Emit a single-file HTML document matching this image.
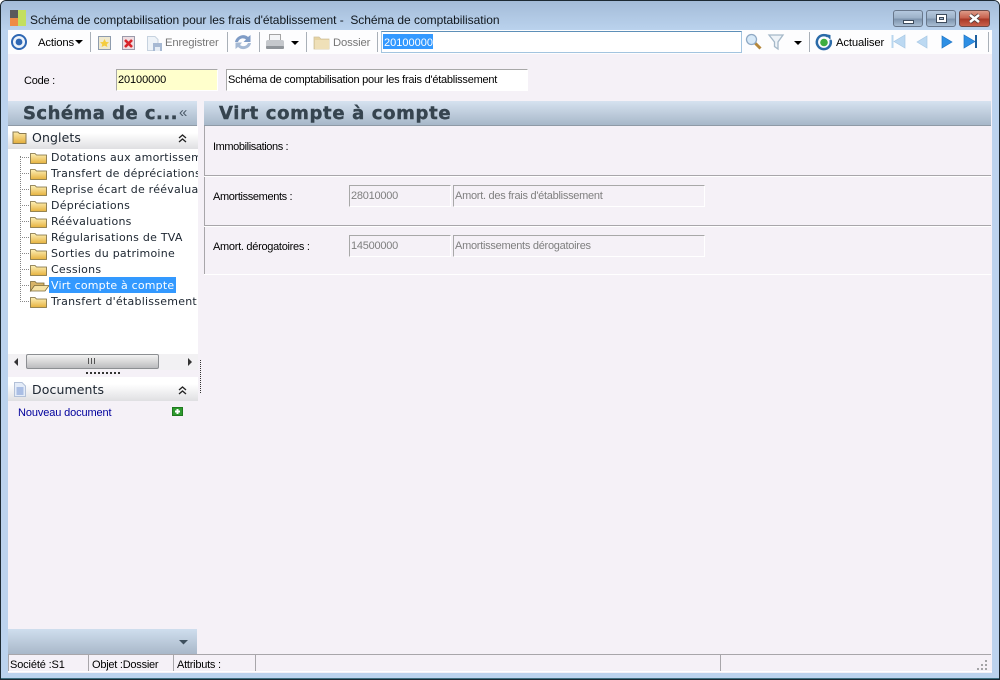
<!DOCTYPE html>
<html><head><meta charset="utf-8"><style>
html,body{margin:0;padding:0;width:1000px;height:680px;overflow:hidden;background:#fff}
*{box-sizing:border-box}
.a{position:absolute}
.t{position:absolute;margin-top:1px;font-family:"Liberation Sans",sans-serif;font-size:11px;line-height:14px;white-space:nowrap;color:#000;letter-spacing:-.24px}
.tb{letter-spacing:-.15px;font-size:11.3px}
.v{position:absolute;margin-top:1px;font-family:"DejaVu Sans",sans-serif;font-size:11px;line-height:14px;white-space:nowrap;color:#1c2530;letter-spacing:.24px}
.h{position:absolute;margin-top:1px;font-family:"DejaVu Sans",sans-serif;font-weight:bold;font-size:18px;line-height:22px;white-space:nowrap;color:#36444f;-webkit-text-stroke:.4px #36444f}
.sep{position:absolute;top:32px;width:1px;height:20px;background:#a9b0b8}
.gh{position:absolute;height:25px;background:linear-gradient(#d6e2f0,#a7b8c9);border-bottom:1px solid #8f9aa6}
.inp{position:absolute;height:22px;background:#f5f1f7;border-top:1px solid #a8a8a8;border-left:1px solid #a8a8a8;border-bottom:1px solid #fff;border-right:1px solid #fff;font-family:"Liberation Sans",sans-serif;font-size:11px;line-height:21px;color:#7f7f7f;padding-left:1px;white-space:nowrap;letter-spacing:-.24px}
.line{position:absolute;background:#a8a6aa}
.white{position:absolute;background:#fff}
.btn{position:absolute;top:10px;height:17px;border:1px solid #68778b;border-radius:3px}
svg{position:absolute;overflow:visible}
</style></head><body>
<div class="a" style="left:0;top:0;width:1000px;height:680px;background:#bcd3ee;border:1px solid #1d2a33;border-radius:6px 6px 0 0"></div>
<div class="a" style="left:1px;top:1px;width:998px;height:29px;background:linear-gradient(#a4bcd8,#bad2ed);border-radius:5px 5px 0 0"></div>
<div class="a" style="left:8px;top:30px;width:984px;height:24px;background:#fdfdfe"></div>
<div class="a" style="left:8px;top:54px;width:984px;height:601px;background:#f5f1f7"></div>
<div class="a" style="left:8px;top:655px;width:984px;height:18px;background:#f5f1f7"></div>
<div class="a" style="left:1px;top:678px;width:998px;height:1px;background:#3f6f80"></div>

<div class="a" style="left:10px;top:10px;width:8px;height:8px;background:#5b5b5b"></div>
<div class="a" style="left:10px;top:18px;width:8px;height:8px;background:#ee8b45"></div>
<div class="a" style="left:18px;top:10px;width:8px;height:16px;background:#c3df5e"></div>
<div class="t" style="left:30px;top:12px;font-size:12px;letter-spacing:-.035px;color:#10171d">Schéma de comptabilisation pour les frais d'établissement -&nbsp; Schéma de comptabilisation</div>

<div class="btn" style="left:893px;width:30px;background:linear-gradient(#b4c8de 0,#9db2c9 45%,#7f95ae 55%,#a9bed4)"></div>
<div class="a" style="left:903px;top:20px;width:11px;height:4px;background:#fff;border:1px solid #3d4b5c"></div>
<div class="btn" style="left:926px;width:30px;background:linear-gradient(#b4c8de 0,#9db2c9 45%,#7f95ae 55%,#a9bed4)"></div>
<div class="a" style="left:936px;top:14px;width:11px;height:9px;background:#fff;border:1px solid #3d4b5c"><div class="a" style="left:2px;top:2px;width:5px;height:3px;background:#a9bdd3;border:1px solid #3d4b5c"></div></div>
<div class="btn" style="left:959px;width:31px;background:linear-gradient(#dd9a88 0,#c8634f 45%,#a93a28 55%,#c8614c);border-color:#6b4a48"></div>
<svg style="left:959px;top:10px" width="31" height="17"><path d="M11 5L20 12M20 5L11 12" stroke="#4a3a3a" stroke-width="4"/><path d="M11 5L20 12M20 5L11 12" stroke="#fff" stroke-width="2.6"/></svg>

<!-- toolbar -->
<svg style="left:10px;top:33px" width="18" height="18"><circle cx="9" cy="9" r="7" fill="#eef4fb" stroke="#2f68b4" stroke-width="2"/><circle cx="9" cy="9" r="3.4" fill="#2f68b4"/></svg>
<div class="t tb" style="left:38px;top:35px">Actions</div>
<svg style="left:75px;top:40px" width="8" height="5"><path d="M0 0H8L4 4Z" fill="#000"/></svg>
<div class="sep" style="left:90px"></div>
<svg style="left:97px;top:35px" width="16" height="16"><rect x="1.500" y="1.500" width="12" height="13" fill="#efe9cf" stroke="#8e9cae"/><path d="M7.500 4L9 7L12 7.300L9.800 9.300L10.400 12L7.500 10.600L4.600 12L5.200 9.300L3 7.300L6 7Z" fill="#f5cc3d"/></svg>
<svg style="left:121px;top:35px" width="16" height="16"><rect x="1.500" y="1.500" width="12" height="13" fill="#eedde1" stroke="#9a9aab"/><path d="M4 5L11 12M11 5L4 12" stroke="#d8242a" stroke-width="2.600"/></svg>
<svg style="left:146px;top:35px" width="17" height="17"><path d="M1.500 1.500H9L12 4.500V15.500H1.500Z" fill="#eef3f8" stroke="#c6d2df"/><rect x="7" y="8" width="9" height="8" fill="#a7b9d3"/><rect x="9" y="12" width="5" height="4" fill="#e6edf5"/></svg>
<div class="t tb" style="left:165px;top:35px;color:#767676">Enregistrer</div>
<div class="sep" style="left:227px"></div>
<svg style="left:234px;top:33px" width="18" height="18"><path d="M1 9C2 3 10 0 14 4L16.500 2V9H9.500L12 6.500C9.500 4.500 5.500 5 4 9Z" fill="#7f9cc6"/><path d="M17 10C16 16 8 18 4 14L1.500 16V9.500H8L6 12C8.500 14 12.500 13.500 14 10Z" fill="#a5b9d4"/></svg>
<div class="sep" style="left:259px"></div>
<svg style="left:265px;top:33px" width="20" height="18"><rect x="4.500" y="1.500" width="11" height="7" fill="#f4f5f7" stroke="#a4a4a4"/><path d="M1 9Q1 7 3 7H17Q19 7 19 9V14H1Z" fill="#c5c8cc"/><rect x="1" y="13" width="18" height="3" rx="1" fill="#8f9499"/></svg>
<svg style="left:291px;top:41px" width="8" height="5"><path d="M0 0H8L4 4Z" fill="#000"/></svg>
<div class="sep" style="left:306px"></div>
<svg style="left:313px;top:34px" width="17" height="16"><path d="M1 3H6L8 5H16V15H1Z" fill="#e6d3a2" stroke="#cfc2a0" stroke-width=".8"/><rect x="2" y="6" width="14" height="9" fill="#efe0b8"/></svg>
<div class="t tb" style="left:333px;top:35px;color:#767676">Dossier</div>
<div class="sep" style="left:377px"></div>
<div class="a" style="left:381px;top:31px;width:361px;height:22px;background:#fff;border:1px solid #a3c4df;border-top-color:#5d8fb8"></div>
<div class="a" style="left:383px;top:34px;width:50px;height:15px;background:#3399ff"></div>
<div class="t" style="left:384px;top:35px;color:#fff;letter-spacing:0">20100000</div>
<svg style="left:745px;top:33px" width="17" height="17"><path d="M10 10L15.500 15.500" stroke="#b5873b" stroke-width="3"/><circle cx="6.500" cy="6.500" r="5" fill="#d7e9f8" stroke="#8fa9c4" stroke-width="1.300"/></svg>
<svg style="left:768px;top:33px" width="17" height="18"><path d="M1 2H15L10 9V16L6.500 13.500V9Z" fill="#eef3f8" stroke="#a5b8c8" stroke-width="1.300"/></svg>
<svg style="left:794px;top:41px" width="8" height="5"><path d="M0 0H8L4 4Z" fill="#000"/></svg>
<div class="sep" style="left:809px"></div>
<svg style="left:815px;top:33px" width="18" height="18"><path d="M13 3.500A7 7 0 1 0 15.500 7" fill="none" stroke="#2b6ba8" stroke-width="2.500"/><path d="M10 1L15.500 2V7Z" fill="#2b6ba8"/><circle cx="9" cy="9.500" r="3.800" fill="#3dae3f"/></svg>
<div class="t tb" style="left:836px;top:35px">Actualiser</div>
<svg style="left:890px;top:33px" width="90" height="18">
<rect x="1.500" y="2" width="2" height="13" fill="#b9d6ee"/><path d="M15 2V15L4 8.500Z" fill="#bcd9f2" stroke="#a8c8e4" stroke-width=".7"/>
<path d="M37 3V15L27 9Z" fill="#bcd9f2" stroke="#a8c8e4" stroke-width=".7"/>
<path d="M52 3V15L62 9Z" fill="#2e8fe4" stroke="#1f74c4" stroke-width=".7"/>
<path d="M74 2V15L85 8.500Z" fill="#2e8fe4" stroke="#1f74c4" stroke-width=".7"/><rect x="85" y="2" width="2" height="13" fill="#1d5f9e"/>
</svg>
<div class="sep" style="left:988px"></div>

<!-- code -->
<div class="t" style="left:24px;top:73px">Code :</div>
<div class="inp" style="left:116px;top:69px;width:102px;background:#ffffcc;color:#000;border-top-color:#a8a8a8;letter-spacing:-.1px">20100000</div>
<div class="inp" style="left:226px;top:69px;width:302px;background:#fff;color:#000">Schéma de comptabilisation pour les frais d'établissement</div>

<!-- left panel -->
<div class="gh" style="left:8px;top:101px;width:189px"></div>
<div class="h" style="left:23px;top:102px;letter-spacing:.47px">Schéma de c...</div>
<div class="t" style="left:179px;top:105px;font-size:15px;color:#4b5a68">«</div>
<div class="a" style="left:8px;top:126px;width:190px;height:23px;background:linear-gradient(#fff,#fff 30%,#dfdfe2)"></div>
<svg style="left:12px;top:130px" width="16" height="15"><defs><linearGradient id="gf" x1="0" y1="0" x2="0" y2="1"><stop offset="0" stop-color="#fbe9a8"/><stop offset="1" stop-color="#e3ad3a"/></linearGradient></defs><path d="M1 2H6L7.500 3.500H14V13.500H1Z" fill="url(#gf)" stroke="#8a7a50"/></svg>
<div class="v" style="left:32px;top:130px;font-size:12.5px;letter-spacing:.1px">Onglets</div>
<svg style="left:178px;top:134px" width="10" height="9"><path d="M1 4L4.500 1L8 4M1 8L4.500 5L8 8" fill="none" stroke="#222" stroke-width="1.300"/></svg>
<div class="a" style="left:8px;top:149px;width:190px;height:205px;background:#fff"></div>

<div class="a" style="left:20px;top:156px;height:146px;border-left:1px dotted #808080"></div>
<svg style="left:20px;top:150px" width="32" height="160">
<g fill="none" stroke="#888" stroke-dasharray="1 1"><path d="M0 7.500H10M0 23.500H10M0 39.500H10M0 55.500H10M0 71.500H10M0 87.500H10M0 103.500H10M0 119.500H10M0 135.500H10M0 151.500H10"/></g>
<defs><linearGradient id="gt" x1="0" y1="0" x2="0" y2="1"><stop offset="0" stop-color="#fdf0b8"/><stop offset="1" stop-color="#e6b23e"/></linearGradient><g id="f"><path d="M.5 2.500H5L6.500 4H16.500V12.500H.5Z" fill="url(#gt)" stroke="#7a6a3a" stroke-width=".8"/></g></defs>
<use href="#f" x="10" y="1"/><use href="#f" x="10" y="17"/><use href="#f" x="10" y="33"/><use href="#f" x="10" y="49"/><use href="#f" x="10" y="65"/><use href="#f" x="10" y="81"/><use href="#f" x="10" y="97"/><use href="#f" x="10" y="113"/>
<path d="M10.500 141V131.500H15L16.500 133H24V136H15Z" fill="#d8b468" stroke="#7a6a3a" stroke-width=".8"/>
<path d="M10.500 141L14.500 135.500H29L25 141Z" fill="#f6e2a4" stroke="#7a6a3a" stroke-width=".8"/>
<use href="#f" x="10" y="145"/>
</svg>
<div class="a" style="left:8px;top:150px;width:190px;height:160px;overflow:hidden">
<div class="v" style="left:43px;top:0">Dotations aux amortissements</div>
<div class="v" style="left:43px;top:16px">Transfert de dépréciations</div>
<div class="v" style="left:43px;top:32px">Reprise écart de réévaluation</div>
<div class="v" style="left:43px;top:48px">Dépréciations</div>
<div class="v" style="left:43px;top:64px">Réévaluations</div>
<div class="v" style="left:43px;top:80px">Régularisations de TVA</div>
<div class="v" style="left:43px;top:96px">Sorties du patrimoine</div>
<div class="v" style="left:43px;top:112px">Cessions</div>
<div class="a" style="left:41px;top:127px;width:127px;height:16px;background:#3399ff"></div>
<div class="v" style="left:43px;top:128px;color:#fff;letter-spacing:.19px">Virt compte à compte</div>
<div class="v" style="left:43px;top:144px">Transfert d'établissement</div>
</div>

<!-- scrollbar -->
<div class="a" style="left:8px;top:354px;width:190px;height:16px;background:#f2f1f3"></div>
<svg style="left:14px;top:358px" width="180" height="9"><path d="M4 0V8L0 4Z" fill="#333"/><path d="M174 0V8L178 4Z" fill="#333"/></svg>
<div class="a" style="left:26px;top:354px;width:133px;height:15px;border:1px solid #8c8f92;border-radius:2px;background:linear-gradient(#f3f3f3,#d8d8d8 50%,#bbbcbe)"></div>
<div class="a" style="left:88px;top:358px;width:8px;height:6px;background:repeating-linear-gradient(90deg,#555 0 1px,transparent 1px 3px)"></div>
<div class="a" style="left:86px;top:372px;width:35px;height:2px;background:repeating-linear-gradient(90deg,#333 0 2px,transparent 2px 4px)"></div>
<div class="a" style="left:200px;top:360px;width:1px;height:33px;border-left:1px dotted #333"></div>

<!-- documents -->
<div class="a" style="left:8px;top:377px;width:190px;height:24px;background:linear-gradient(#fff,#fff 30%,#dfdfe2)"></div>
<svg style="left:13px;top:382px" width="14" height="15"><path d="M1.500 .5H9L12.500 4V14.500H1.500Z" fill="#e4ecf8" stroke="#b3c1d8"/><path d="M3.500 6H10.500M3.500 8H10.500M3.500 10H10.500M3.500 12H10.500" stroke="#6f8fd0"/></svg>
<div class="v" style="left:32px;top:382px;font-size:12.5px;letter-spacing:.1px">Documents</div>
<svg style="left:178px;top:386px" width="10" height="9"><path d="M1 4L4.500 1L8 4M1 8L4.500 5L8 8" fill="none" stroke="#222" stroke-width="1.300"/></svg>
<div class="t" style="left:18px;top:405px;color:#00009c;letter-spacing:-.12px">Nouveau document</div>
<div class="a" style="left:172px;top:407px;width:11px;height:9px;background:#2f9a2f;border:1px solid #1f7a1f"></div>
<svg style="left:172px;top:407px" width="11" height="9"><path d="M5.500 2V7M3 4.500H8" stroke="#fff" stroke-width="2"/></svg>

<div class="gh" style="left:8px;top:629px;width:189px;height:25px;border:0;background:linear-gradient(#cfdeee,#a9b8c9)"></div>
<svg style="left:179px;top:640px" width="9" height="5"><path d="M0 0H9L4.500 4.500Z" fill="#3e4f5d"/></svg>

<!-- right panel -->
<div class="gh" style="left:204px;top:101px;width:787px"></div>
<div class="h" style="left:219px;top:102px;letter-spacing:.65px">Virt compte à compte</div>

<div class="line" style="left:204px;top:126px;width:1px;height:148px"></div>
<div class="t" style="left:213px;top:139px;letter-spacing:-.4px">Immobilisations :</div>
<div class="line" style="left:204px;top:175px;width:787px;height:1px"></div>
<div class="white" style="left:204px;top:176px;width:787px;height:1px"></div>
<div class="t" style="left:213px;top:189px;letter-spacing:-.36px">Amortissements :</div>
<div class="inp" style="left:349px;top:185px;width:102px">28010000</div>
<div class="inp" style="left:453px;top:185px;width:252px;letter-spacing:-.27px">Amort. des frais d'établissement</div>
<div class="line" style="left:204px;top:225px;width:787px;height:1px"></div>
<div class="white" style="left:204px;top:226px;width:787px;height:1px"></div>
<div class="t" style="left:213px;top:239px;letter-spacing:-.29px">Amort. dérogatoires :</div>
<div class="inp" style="left:349px;top:235px;width:102px">14500000</div>
<div class="inp" style="left:453px;top:235px;width:252px;letter-spacing:-.27px">Amortissements dérogatoires</div>
<div class="white" style="left:204px;top:274px;width:787px;height:1px"></div>

<!-- status -->
<div class="line" style="left:8px;top:654px;width:983px;height:1px"></div>
<div class="white" style="left:8px;top:671px;width:984px;height:1px"></div>
<div class="line" style="left:8px;top:655px;width:1px;height:16px"></div>
<div class="line" style="left:88px;top:655px;width:1px;height:16px"></div>
<div class="line" style="left:173px;top:655px;width:1px;height:16px"></div>
<div class="line" style="left:255px;top:655px;width:1px;height:16px"></div>
<div class="line" style="left:720px;top:655px;width:1px;height:16px"></div>
<div class="t" style="left:10px;top:657px;letter-spacing:-.14px">Société :S1</div>
<div class="t" style="left:92px;top:657px">Objet :Dossier</div>
<div class="t" style="left:177px;top:657px">Attributs :</div>
<svg style="left:977px;top:660px" width="12" height="11"><path d="M8 0h2v2H8zM4 4h2v2H4zM8 4h2v2H8zM0 8h2v2H0zM4 8h2v2H4zM8 8h2v2H8z" fill="#a3a3a6"/></svg>
</body></html>
